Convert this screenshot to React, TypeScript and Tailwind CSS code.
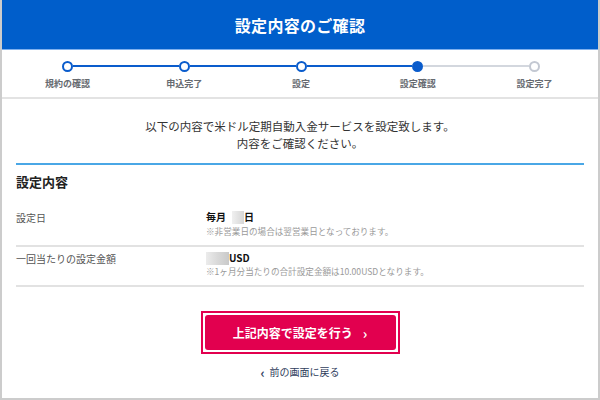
import React from 'react';

const steps = [
  { label: '規約の確認', state: 'done' },
  { label: '申込完了', state: 'done' },
  { label: '設定', state: 'done' },
  { label: '設定確認', state: 'current' },
  { label: '設定完了', state: 'todo' },
];

const Blur: React.FC<{ w: string }> = ({ w }) => (
  <span className={`inline-block h-[13px] ${w} bg-gradient-to-r from-[#ececec] via-[#d9d9d9] to-[#c9c9c9] align-middle`} />
);

const App: React.FC = () => {
  return (
    <div
      className="w-[600px] h-[400px] bg-white border-x-2 border-b-2 border-[#cccccc] flex flex-col overflow-hidden"
      style={{ fontFamily: '"Noto Sans CJK JP", "Noto Sans", sans-serif' }}
    >
      {/* header */}
      <div className="h-[50px] shrink-0 bg-[#005ecb] border-b border-[#7fb0ee] flex items-center justify-center">
        <h1 className="text-white text-[16px] font-bold tracking-[0.3px]">設定内容のご確認</h1>
      </div>

      {/* stepper */}
      <div className="h-[49px] shrink-0 border-b-2 border-[#e3e3e3] pl-[7px] pr-[5px] pt-[11px] grid grid-cols-5">
        {steps.map((s, i) => {
          const leftColor = i === 0 ? 'bg-transparent' : s.state === 'todo' ? 'bg-[#d3d7de]' : 'bg-[#0a5ccc]';
          const next = steps[i + 1];
          const rightColor = !next ? 'bg-transparent' : next.state === 'todo' ? 'bg-[#d3d7de]' : 'bg-[#0a5ccc]';
          const circle =
            s.state === 'current'
              ? 'bg-[#0a5ccc] border-[#0a5ccc]'
              : s.state === 'done'
              ? 'bg-white border-[#0a5ccc]'
              : 'bg-white border-[#c3c8d2]';
          return (
            <div key={s.label} className="flex flex-col items-center">
              <div className="flex items-center w-full h-[10px]">
                <div className={`flex-1 h-[2px] ${leftColor}`} />
                <div className={`w-[11px] h-[11px] rounded-full border-2 shrink-0 ${circle}`} />
                <div className={`flex-1 h-[2px] ${rightColor}`} />
              </div>
              <span className="mt-[7px] text-[9px] leading-[11px] font-bold text-[#666a70]">{s.label}</span>
            </div>
          );
        })}
      </div>

      {/* body */}
      <div className="flex-1 px-[14px]">
        <div className="pt-[19px] pb-[11px] text-center text-[11.5px] leading-[17px] text-[#333333]">
          <p>以下の内容で米ドル定期自動入金サービスを設定致します。</p>
          <p>内容をご確認ください。</p>
        </div>

        <div className="h-[2px] bg-[#4aa7e6]" />

        <h2 className="mt-[8px] text-[13px] leading-[18px] font-bold text-[#222222]">設定内容</h2>

        <div className="mt-[19px] flex border-b-2 border-[#e2e2e2] pb-[8px]">
          <div className="w-[190px] pt-[1px] text-[10px] leading-[14px] text-[#555555]">設定日</div>
          <div>
            <div className="text-[10px] leading-[14px] font-bold text-[#111111] flex items-center">
              <span>毎月</span>
              <span className="w-[6px]" />
              <span className="inline-block h-[13px] w-[12px] bg-gradient-to-r from-[#f0f0f0] to-[#d6d6d6]" />
              <span>日</span>
            </div>
            <div className="mt-[2px] text-[8.6px] leading-[11px] text-[#9a9a9a]">※非営業日の場合は翌営業日となっております。</div>
          </div>
        </div>

        <div className="pt-[4px] flex border-b-2 border-[#e2e2e2] pb-[8px]">
          <div className="w-[190px] pt-[1px] text-[10px] leading-[14px] text-[#555555]">一回当たりの設定金額</div>
          <div>
            <div className="text-[10px] leading-[14px] font-bold text-[#111111] flex items-center">
              <Blur w="w-[23px]" />
              <span>USD</span>
            </div>
            <div className="mt-[1px] text-[8.6px] leading-[11px] text-[#9a9a9a]">※1ヶ月分当たりの合計設定金額は10.00USDとなります。</div>
          </div>
        </div>

        <div className="mt-[24px] flex justify-center">
          <div className="border-2 border-[#e2004f] p-[2px]">
            <button className="w-[191px] h-[35px] rounded-[3px] bg-[#e2004f] text-white text-[12px] font-bold flex items-center justify-center gap-[10px]">
              <span>上記内容で設定を行う</span>
              <span className="text-[14px] leading-none font-bold">›</span>
            </button>
          </div>
        </div>

        <div className="mt-[11px] flex justify-center">
          <a className="text-[10px] leading-[14px] text-[#2f3d5c] flex items-center gap-[5px]">
            <span className="text-[13px] leading-none font-bold">‹</span>
            <span>前の画面に戻る</span>
          </a>
        </div>
      </div>
    </div>
  );
};

export default App;
